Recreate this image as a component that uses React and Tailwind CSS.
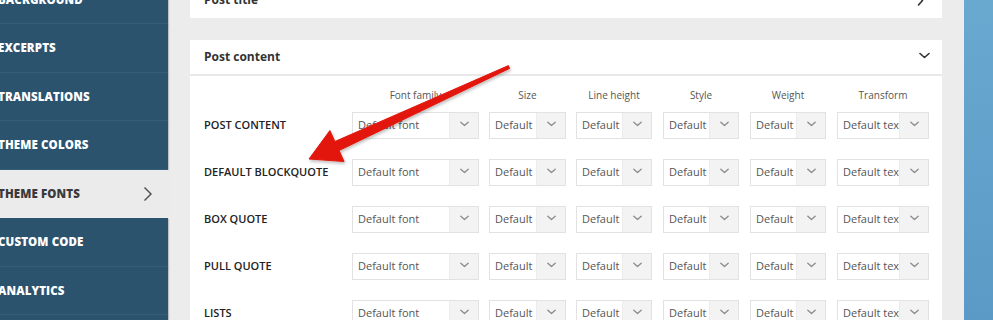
const NAV = [
  { label: 'BACKGROUND' },
  { label: 'EXCERPTS' },
  { label: 'TRANSLATIONS' },
  { label: 'THEME COLORS' },
  { label: 'THEME FONTS', active: true },
  { label: 'CUSTOM CODE' },
  { label: 'ANALYTICS' },
  { label: 'PERFORMANCE' },
]

const COLUMNS = [
  { label: 'Font family', width: 'w-[127px]', value: 'Default font' },
  { label: 'Size', width: 'w-[77px]', value: 'Default' },
  { label: 'Line height', width: 'w-[76px]', value: 'Default' },
  { label: 'Style', width: 'w-[76px]', value: 'Default' },
  { label: 'Weight', width: 'w-[76px]', value: 'Default' },
  { label: 'Transform', width: 'w-[92px]', value: 'Default tex' },
]

const ROWS = ['POST CONTENT', 'DEFAULT BLOCKQUOTE', 'BOX QUOTE', 'PULL QUOTE', 'LISTS']

function Chevron({ dir = 'down', className = '' }) {
  const d = dir === 'down' ? 'M1 1.5l4.5 4 4.5-4' : 'M1.5 1l4 4.5-4 4.5'
  return (
    <svg viewBox="0 0 11 11" className={className} aria-hidden="true">
      <path d={d} fill="none" stroke="currentColor" strokeWidth="1.6" strokeLinecap="round" strokeLinejoin="round" />
    </svg>
  )
}

function FakeSelect({ width, value }) {
  return (
    <div className={`flex h-[27px] shrink-0 border border-[#e2e2e2] bg-white ${width}`}>
      <div className="flex min-w-0 flex-1 items-center overflow-hidden whitespace-nowrap pl-[5px] text-[11px] text-[#555]">
        {value}
      </div>
      <div className="flex w-[29px] shrink-0 items-center justify-center border-l border-[#ececec] bg-[#f3f3f3] text-[#8c8c8c]">
        <Chevron className="h-[9px] w-[9px]" />
      </div>
    </div>
  )
}

function Sidebar() {
  return (
    <aside className="relative z-10 w-[170px] shrink-0">
      <div className="-mt-[24.5px]">
        {NAV.map((item) =>
          item.active ? (
            <div
              key={item.label}
              className="flex h-[48.5px] items-center justify-between bg-[#ebebeb] pr-[17px]"
            >
              <span className="-ml-[2px] text-[11.5px] font-extrabold tracking-[0.01em] text-[#3a3a3a]">
                {item.label}
              </span>
              <svg viewBox="0 0 10 16" className="h-[16px] w-[10px] text-[#4a4a4a]" aria-hidden="true">
                <path d="M1.5 1.5l6.5 6.5-6.5 6.5" fill="none" stroke="currentColor" strokeWidth="1.4" />
              </svg>
            </div>
          ) : (
            <div
              key={item.label}
              className="flex h-[48.5px] w-[168px] items-center border-b border-[#335d79] bg-[#2b536e] shadow-[1px_1px_1px_rgba(0,0,0,0.18)]"
            >
              <span className="-ml-[2px] text-[11.5px] font-extrabold tracking-[0.01em] text-white">
                {item.label}
              </span>
            </div>
          ),
        )}
      </div>
    </aside>
  )
}

function Arrow() {
  return (
    <svg
      className="pointer-events-none absolute left-0 top-0 z-20 h-[320px] w-[993px]"
      viewBox="0 0 993 320"
      aria-hidden="true"
    >
      <defs>
        <filter id="arrow-shadow" x="-10%" y="-10%" width="130%" height="140%">
          <feDropShadow dx="1" dy="2" stdDeviation="1.5" floodColor="#000" floodOpacity="0.25" />
        </filter>
      </defs>
      <polygon
        filter="url(#arrow-shadow)"
        fill="#e3170d"
        strokeLinejoin="round"
        stroke="#e3170d"
        strokeWidth="1"
        points="508.4,65.6 334.9,141.5 329.9,130.5 309,159 344.1,161.5 339.1,150.5 509.6,68.4"
      />
    </svg>
  )
}

export default function App() {
  return (
    <div className="relative flex h-[320px] w-[993px] overflow-hidden bg-[#ececec] font-['Open_Sans',sans-serif]">
      <Sidebar />

      <main className="ml-[20px] flex w-[752px] shrink-0 flex-col">
        <section className="-mt-[17px] flex h-[34.5px] shrink-0 items-center justify-between bg-white pl-[14px] pr-[14px]">
          <h2 className="text-[12px] font-bold text-[#333]">Post title</h2>
          <Chevron dir="right" className="h-[11px] w-[11px] text-[#333]" />
        </section>

        <section className="mt-[22.5px] shrink-0 bg-white pb-[20px]">
          <header className="flex h-[36px] items-center justify-between border-b-2 border-[#e9e9e9] pl-[14px] pr-[12px]">
            <h2 className="text-[12px] font-bold text-[#333]">Post content</h2>
            <Chevron className="h-[11px] w-[11px] text-[#333]" />
          </header>

          <div className="pl-[14px] pt-[12px]">
            <div className="flex items-center">
              <div className="w-[148px] shrink-0" />
              <div className="flex gap-x-[10px]">
                {COLUMNS.map((col, i) => (
                  <div
                    key={col.label}
                    className={`${col.width} ${i >= 3 ? 'ml-[1px]' : ''} shrink-0 text-center text-[10px] leading-[14px] text-[#555]`}
                  >
                    {col.label}
                  </div>
                ))}
              </div>
            </div>

            <div className="mt-[9.5px] flex flex-col gap-y-[20px]">
              {ROWS.map((row) => (
                <div key={row} className="flex items-center">
                  <div className="w-[148px] shrink-0 text-[11px] font-semibold text-[#222]">{row}</div>
                  <div className="flex gap-x-[10px]">
                    {COLUMNS.map((col, i) => (
                      <div key={col.label} className={i >= 3 ? 'ml-[1px]' : ''}>
                        <FakeSelect width={col.width} value={col.value} />
                      </div>
                    ))}
                  </div>
                </div>
              ))}
            </div>
          </div>
        </section>
      </main>

      <div className="ml-[22px] h-full w-[29px] shrink-0 bg-gradient-to-b from-[#69a8cf] to-[#5b9ac6]" />

      <Arrow />
    </div>
  )
}
